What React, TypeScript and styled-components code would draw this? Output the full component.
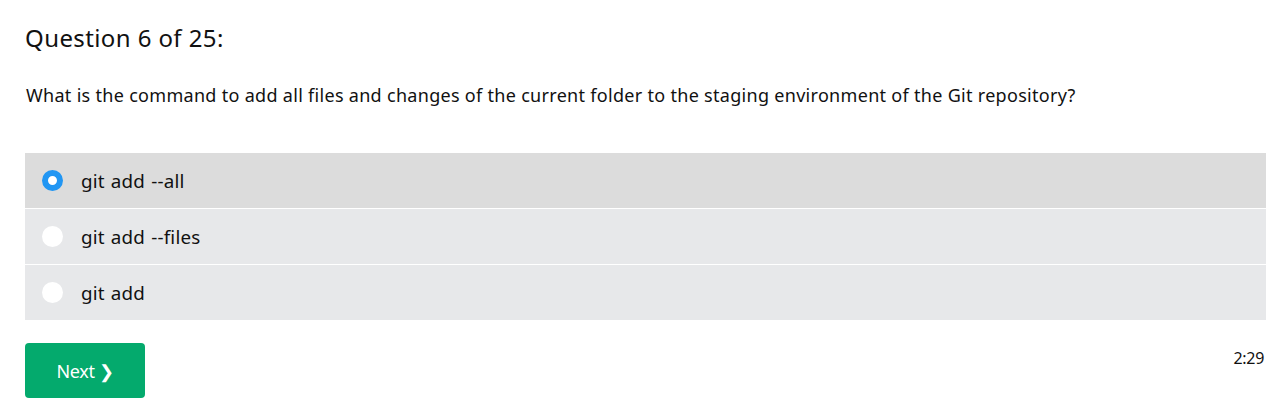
import React, {useState} from 'react';
import styled, {createGlobalStyle} from "styled-components";

const GlobalStyle = createGlobalStyle`
    body {
        margin: 0;
        background: #fff;
        font-family: "Segoe UI", "Noto Sans", "Open Sans", sans-serif;
        color: #111;
    }
`

const Wrapper = styled.div`
    padding: 22px 13px 0 25px;
`

const Title = styled.h2`
    margin: 0;
    font-size: 24px;
    font-weight: 400;
    line-height: 32px;
    letter-spacing: 0.4px;
`

const QuestionText = styled.p`
    margin: 28px 0 0 1px;
    font-size: 18px;
    line-height: 26px;
    letter-spacing: 0.3px;
`

const Options = styled.div`
    margin-top: 45px;
    display: flex;
    flex-direction: column;
    row-gap: 1px;
`

const Option = styled.label<{ $selected: boolean }>`
    height: 55px;
    display: flex;
    align-items: center;
    column-gap: 18px;
    padding-left: 17px;
    background: ${p => p.$selected ? '#dcdcdc' : '#e7e8ea'};
    font-size: 18.8px;
    letter-spacing: 0.2px;
    word-spacing: 1px;
    cursor: pointer;
`

const Radio = styled.span<{ $checked: boolean }>`
    width: 21px;
    height: 21px;
    border-radius: 50%;
    box-sizing: border-box;
    background: #fff;
    border: ${p => p.$checked ? '6.5px solid #2196f3' : 'none'};
    flex-shrink: 0;
`

const Footer = styled.div`
    margin-top: 23px;
    display: flex;
    justify-content: space-between;
    align-items: flex-start;
`

const NextButton = styled.button`
    width: 120px;
    height: 55px;
    border: none;
    border-radius: 4px;
    background: #04aa6d;
    color: #fff;
    font-family: inherit;
    font-size: 18px;
    letter-spacing: -0.35px;
    cursor: pointer;
`

const Timer = styled.span`
    margin-top: 4px;
    font-size: 16px;
    letter-spacing: -0.3px;
    padding-right: 2px;
`

const answers = ['git add --all', 'git add --files', 'git add'];

const App = () => {
  const [selected, setSelected] = useState(0);

  return (
    <Wrapper>
      <GlobalStyle/>
      <Title>Question 6 of 25:</Title>
      <QuestionText>
        What is the command to add all files and changes of the current folder to the staging environment of the Git repository?
      </QuestionText>
      <Options>
        {answers.map((a, i) =>
          <Option key={a} $selected={selected === i} onClick={e => setSelected(i)}>
            <Radio $checked={selected === i}/>
            {a}
          </Option>
        )}
      </Options>
      <Footer>
        <NextButton>Next ❯</NextButton>
        <Timer>2:29</Timer>
      </Footer>
    </Wrapper>
  );
};

export default App;
